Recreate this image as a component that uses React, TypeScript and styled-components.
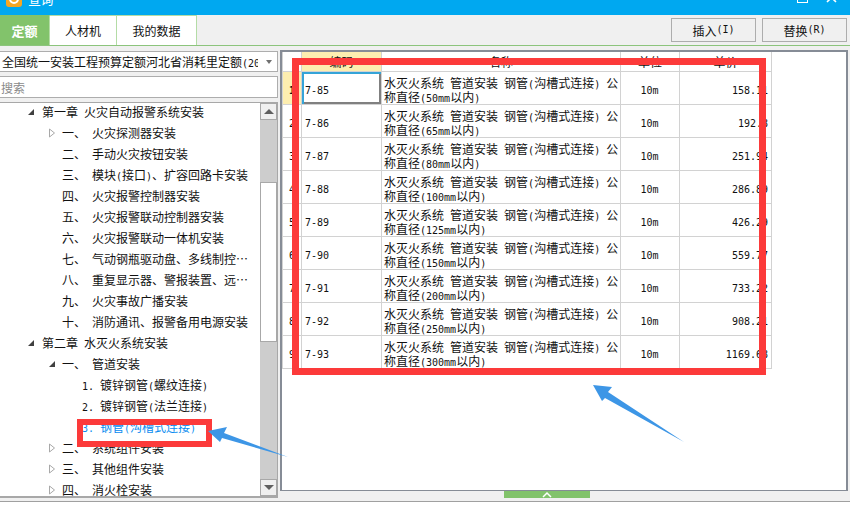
import React from 'react'
import styled, { createGlobalStyle } from 'styled-components'

const GlobalStyle = createGlobalStyle`
   html, body {
      margin: 0;
      padding: 0;
      background: #ffffff;
   }
   * {
      box-sizing: border-box;
   }
`

const CJK = `"Noto Sans CJK SC", "Liberation Sans", sans-serif`

const Page = styled.div`
   position: relative;
   width: 850px;
   height: 509px;
   display: flex;
   flex-direction: column;
   overflow: hidden;
   background: #f0f0f0;
   font-family: ${CJK};
   font-size: 12px;
   color: #111111;
`

const TitleBar = styled.div`
   height: 15px;
   flex: none;
   display: flex;
   align-items: flex-end;
   overflow: hidden;
   background: #00a8f0;
   padding: 0 13px 0 6px;
`

const Logo = styled.svg`
   flex: none;
   width: 16px;
   height: 16px;
   margin-bottom: 8px;
`

const TitleText = styled.span`
   margin: 0 0 9px 6px;
   color: #ffffff;
   font-size: 13px;
   letter-spacing: -0.5px;
   line-height: 14px;
`

const WindowSquare = styled.div`
   width: 11px;
   height: 11px;
   margin: 0 18px 12px auto;
   border: 1px solid #ffffff;
`

const WindowClose = styled.svg`
   flex: none;
   width: 11px;
   height: 11px;
   margin-bottom: 12px;
`

const TopRow = styled.div`
   height: 31px;
   flex: none;
   display: flex;
   align-items: flex-start;
   border-bottom: 1px solid #8cc47c;
`

const Tabs = styled.div`
   display: flex;
   height: 30px;
`

const Tab = styled.div<{ $active?: boolean; $width: number }>`
   width: ${(p) => p.$width}px;
   display: flex;
   align-items: center;
   justify-content: center;
   background: ${(p) => (p.$active ? '#82c36b' : '#ffffff')};
   color: ${(p) => (p.$active ? '#ffffff' : '#111111')};
   font-size: ${(p) => (p.$active ? 13 : 12)}px;
   font-weight: ${(p) => (p.$active ? 700 : 400)};
   border-right: 1px solid #b4dca6;
   border-top: 1px solid ${(p) => (p.$active ? '#82c36b' : '#b4dca6')};
`

const Actions = styled.div`
   margin-left: auto;
   display: flex;
   gap: 6px;
   padding: 3px 3px 0 0;
`

const ActionButton = styled.button`
   width: 85px;
   height: 24px;
   padding: 0;
   display: flex;
   align-items: center;
   justify-content: center;
   font-family: inherit;
   font-size: 12px;
   color: #111111;
   background: #f0f0f0;
   border: 1px solid #adadad;
`

const Body = styled.div`
   height: 456px;
   flex: none;
   display: flex;
   gap: 2px;
   border-bottom: 1px solid #a0a0a0;
`

const LeftColumn = styled.div`
   width: 278px;
   flex: none;
   display: flex;
   flex-direction: column;
   gap: 4px;
   padding: 5px 0 3px;
`

const Combo = styled.div`
   height: 21px;
   flex: none;
   display: flex;
   align-items: center;
   padding: 0 5px 0 2px;
   background: #ffffff;
   border: 1px solid #adadad;
   border-left: none;
`

const ComboText = styled.span`
   width: 256px;
   overflow: hidden;
   white-space: nowrap;
`

const ComboCaret = styled.span`
   margin-left: auto;
   margin-right: 0;
   width: 0;
   height: 0;
   border-left: 3px solid transparent;
   border-right: 3px solid transparent;
   border-top: 4px solid #707070;
`

const SearchBox = styled.div`
   height: 22px;
   flex: none;
   display: flex;
   align-items: center;
   padding-left: 1px;
   color: #8a8a8a;
   background: #ffffff;
   border: 1px solid #adadad;
   border-left: none;
`

const TreePanel = styled.div`
   flex: 1;
   min-height: 0;
   display: flex;
   background: #ffffff;
   border: 1px solid #a8a8a8;
   border-left: none;
   border-bottom-width: 2px;
`

const TreeList = styled.div`
   flex: 1;
   min-width: 0;
   overflow: hidden;
`

const TreeRow = styled.div<{ $indent: number; $selected?: boolean }>`
   height: 21px;
   display: flex;
   align-items: center;
   padding-left: ${(p) => p.$indent}px;
   padding-bottom: 4px;
   white-space: nowrap;
   color: ${(p) => (p.$selected ? '#0a8cf0' : '#111111')};
`

const Toggle = styled.svg`
   flex: none;
   width: 8px;
   height: 10px;
`

const ToggleSlot = styled.span<{ $width: number }>`
   flex: none;
   width: ${(p) => p.$width}px;
   display: flex;
   align-items: center;
`

const Marker = styled.span<{ $width: number }>`
   flex: none;
   width: ${(p) => p.$width}px;
`

const ScrollBar = styled.div`
   width: 17px;
   flex: none;
   display: flex;
   flex-direction: column;
   background: #cdcdcd;
`

const ScrollButton = styled.div<{ $up?: boolean }>`
   height: 17px;
   flex: none;
   display: flex;
   align-items: center;
   justify-content: center;
   background: #f0f0f0;
   border: 1px solid #a8a8a8;
   &::after {
      content: '';
      border-left: 5px solid transparent;
      border-right: 5px solid transparent;
      ${(p) => (p.$up ? 'border-bottom' : 'border-top')}: 5px solid #606060;
   }
`

const ScrollTrack = styled.div<{ $flex: number }>`
   flex: ${(p) => p.$flex};
`

const ScrollThumb = styled.div<{ $flex: number }>`
   flex: ${(p) => p.$flex};
   background: #ffffff;
   border: 1px solid #a8a8a8;
`

const RightColumn = styled.div`
   flex: 1;
   display: flex;
   flex-direction: column;
   padding: 4px 2px 0 0;
`

const GridPanel = styled.div`
   height: 441px;
   flex: none;
   background: #ffffff;
   border: 2px solid #868c96;
   border-bottom-width: 1px;
`

const Grid = styled.table`
   table-layout: fixed;
   width: 490px;
   border-spacing: 0;
   border-collapse: separate;
`

const HeadCell = styled.th<{ $active?: boolean }>`
   height: 20px;
   padding: 0;
   font-weight: 400;
   font-size: 12px;
   background: ${(p) => (p.$active ? '#fdeeb0' : '#ffffff')};
   border-right: 1px solid #d2d2d2;
   border-bottom: 1px solid #d2d2d2;
   &:first-child {
      border-left: 1px solid #d2d2d2;
   }
`

const RowNumber = styled.td<{ $active?: boolean }>`
   height: 33px;
   padding: 0 0 0 6px;
   font-weight: ${(p) => (p.$active ? 700 : 400)};
   background: ${(p) => (p.$active ? '#fdeeb0' : '#ffffff')};
   border-left: 1px solid #d2d2d2;
   border-right: 1px solid #d2d2d2;
   border-bottom: 1px solid #d2d2d2;
`

const Cell = styled.td<{ $align?: string }>`
   height: 33px;
   padding: 1px 3px 0 2px;
   line-height: 14px;
   text-align: ${(p) => p.$align || 'left'};
   border-right: 1px solid #d2d2d2;
   border-bottom: 1px solid #d2d2d2;
`

const CodeCell = styled(Cell)<{ $selected?: boolean }>`
   padding-left: 3px;
   box-shadow: ${(p) => (p.$selected ? 'inset 2px 2px 0 #35a4d8, inset -2px -2px 0 #808080' : 'none')};
`

const NameCell = styled(Cell)`
   padding: 4px 1px 0 2px;
`

const Ascii = styled.span`
   font-family: "DejaVu Sans Mono", "Liberation Mono", monospace;
   font-size: 10px;
   line-height: 10px;
   white-space: pre-wrap;
`

const Handle = styled.div`
   width: 86px;
   height: 7px;
   margin-left: 224px;
   display: flex;
   justify-content: center;
   align-items: flex-end;
   background: #82c36b;
`

const HandleIcon = styled.svg`
   width: 10px;
   height: 7px;
`

const BottomStrip = styled.div`
   flex: 1;
   background: #ffffff;
`

const RedFrame = styled.div<{ $x: number; $y: number; $w: number; $h: number; $stroke: number }>`
   position: absolute;
   left: ${(p) => p.$x}px;
   top: ${(p) => p.$y}px;
   width: ${(p) => p.$w}px;
   height: ${(p) => p.$h}px;
   border: ${(p) => p.$stroke}px solid #fc3a3a;
`

const ArrowLayer = styled.svg`
   position: absolute;
   left: 0;
   top: 0;
   width: 850px;
   height: 509px;
   pointer-events: none;
`

// half width runs get a 6px mono face, like the bitmap font in the original
const T: React.FC<{ children: string }> = ({ children }) => (
   <>
      {children.split(/([\x20-\x7e]+)/).map((part, i) =>
         /^[\x20-\x7e]+$/.test(part) ? <Ascii key={i}>{part}</Ascii> : part,
      )}
   </>
)

const Expanded = () => (
   <Toggle viewBox="0 0 8 10">
      <polygon points="7,2 7,8 1,8" fill="#404040" />
   </Toggle>
)

const Collapsed = () => (
   <Toggle viewBox="0 0 8 10">
      <polygon points="1.5,1 6.5,5 1.5,9" fill="#ffffff" stroke="#a8a8a8" />
   </Toggle>
)

type TreeItem = {
   level: 1 | 2 | 3
   marker?: string
   name: string
   toggle?: 'open' | 'closed'
   selected?: boolean
}

const tree: TreeItem[] = [
   { level: 1, name: '第一章 火灾自动报警系统安装', toggle: 'open' },
   { level: 2, marker: '一、', name: '火灾探测器安装', toggle: 'closed' },
   { level: 2, marker: '二、', name: '手动火灾按钮安装' },
   { level: 2, marker: '三、', name: '模块(接口)、扩容回路卡安装' },
   { level: 2, marker: '四、', name: '火灾报警控制器安装' },
   { level: 2, marker: '五、', name: '火灾报警联动控制器安装' },
   { level: 2, marker: '六、', name: '火灾报警联动一体机安装' },
   { level: 2, marker: '七、', name: '气动钢瓶驱动盘、多线制控…' },
   { level: 2, marker: '八、', name: '重复显示器、警报装置、远…' },
   { level: 2, marker: '九、', name: '火灾事故广播安装' },
   { level: 2, marker: '十、', name: '消防通讯、报警备用电源安装' },
   { level: 1, name: '第二章 水灭火系统安装', toggle: 'open' },
   { level: 2, marker: '一、', name: '管道安装', toggle: 'open' },
   { level: 3, marker: '1.', name: '镀锌钢管(螺纹连接)' },
   { level: 3, marker: '2.', name: '镀锌钢管(法兰连接)' },
   { level: 3, marker: '3.', name: '钢管(沟槽式连接)', selected: true },
   { level: 2, marker: '二、', name: '系统组件安装', toggle: 'closed' },
   { level: 2, marker: '三、', name: '其他组件安装', toggle: 'closed' },
   { level: 2, marker: '四、', name: '消火栓安装', toggle: 'closed' },
]

const rows = [
   ['7-85', '50mm', '158.11'],
   ['7-86', '65mm', '192.8'],
   ['7-87', '80mm', '251.94'],
   ['7-88', '100mm', '286.89'],
   ['7-89', '125mm', '426.29'],
   ['7-90', '150mm', '559.77'],
   ['7-91', '200mm', '733.22'],
   ['7-92', '250mm', '908.21'],
   ['7-93', '300mm', '1169.68'],
]

const indents = { 1: 27, 2: 48, 3: 82 }

const App: React.FC = () => {
   return (
      <Page>
         <GlobalStyle />
         <TitleBar>
            <Logo viewBox="0 0 16 16">
               <rect width="16" height="16" rx="3" fill="#f5a623" />
               <path d="M4 8a4 4 0 1 0 8 0" fill="none" stroke="#ffffff" strokeWidth="2" />
            </Logo>
            <TitleText>查询</TitleText>
            <WindowSquare />
            <WindowClose viewBox="0 0 11 11">
               <path d="M1 1l9 9M10 1l-9 9" stroke="#ffffff" strokeWidth="1.6" />
            </WindowClose>
         </TitleBar>
         <TopRow>
            <Tabs>
               <Tab $active $width={50}>
                  定额
               </Tab>
               <Tab $width={67}>人材机</Tab>
               <Tab $width={80}>我的数据</Tab>
            </Tabs>
            <Actions>
               <ActionButton>
                  <T>插入(I)</T>
               </ActionButton>
               <ActionButton>
                  <T>替换(R)</T>
               </ActionButton>
            </Actions>
         </TopRow>
         <Body>
            <LeftColumn>
               <Combo>
                  <ComboText>
                     <T>全国统一安装工程预算定额河北省消耗里定额(2017)</T>
                  </ComboText>
                  <ComboCaret />
               </Combo>
               <SearchBox>搜索</SearchBox>
               <TreePanel>
                  <TreeList>
                     {tree.map((item, i) => (
                        <TreeRow key={i} $indent={indents[item.level]} $selected={item.selected}>
                           {item.level < 3 && (
                              <ToggleSlot $width={item.level === 1 ? 15 : 14}>
                                 {item.toggle === 'open' && <Expanded />}
                                 {item.toggle === 'closed' && <Collapsed />}
                              </ToggleSlot>
                           )}
                           {item.marker && (
                              <Marker $width={item.level === 2 ? 30 : 18}>
                                 <T>{item.marker}</T>
                              </Marker>
                           )}
                           <span>
                              <T>{item.name}</T>
                           </span>
                        </TreeRow>
                     ))}
                  </TreeList>
                  <ScrollBar>
                     <ScrollButton $up />
                     <ScrollTrack $flex={64} />
                     <ScrollThumb $flex={162} />
                     <ScrollTrack $flex={140} />
                     <ScrollButton />
                  </ScrollBar>
               </TreePanel>
            </LeftColumn>
            <RightColumn>
               <GridPanel>
                  <Grid>
                     <colgroup>
                        <col width={20} />
                        <col width={80} />
                        <col width={239} />
                        <col width={59} />
                        <col width={92} />
                     </colgroup>
                     <thead>
                        <tr>
                           <HeadCell />
                           <HeadCell $active>编码</HeadCell>
                           <HeadCell>名称</HeadCell>
                           <HeadCell>单位</HeadCell>
                           <HeadCell>单价</HeadCell>
                        </tr>
                     </thead>
                     <tbody>
                        {rows.map(([code, size, price], i) => (
                           <tr key={code}>
                              <RowNumber $active={i === 0}>
                                 <T>{String(i + 1)}</T>
                              </RowNumber>
                              <CodeCell $selected={i === 0}>
                                 <T>{code}</T>
                              </CodeCell>
                              <NameCell>
                                 <T>{`水灭火系统 管道安装 钢管(沟槽式连接) 公称直径(${size}以内)`}</T>
                              </NameCell>
                              <Cell $align="center">
                                 <T>10m</T>
                              </Cell>
                              <Cell $align="right">
                                 <T>{price}</T>
                              </Cell>
                           </tr>
                        ))}
                     </tbody>
                  </Grid>
               </GridPanel>
               <Handle>
                  <HandleIcon viewBox="0 0 10 7">
                     <path d="M1 6l4-4 4 4" fill="none" stroke="#ffffff" strokeWidth="1.5" />
                  </HandleIcon>
               </Handle>
            </RightColumn>
         </Body>
         <BottomStrip />
         <RedFrame $x={292} $y={58} $w={474} $h={317} $stroke={7} />
         <RedFrame $x={77} $y={419} $w={135} $h={28} $stroke={6} />
         <ArrowLayer viewBox="0 0 850 509">
            <polygon points="208,431 227,427 224,433 288,457 222,438 220,442" fill="#3d96e6" />
            <polygon points="593,385 612,387 608,392 684,442 605,398 602,401" fill="#3d96e6" />
         </ArrowLayer>
      </Page>
   )
}

export default App
